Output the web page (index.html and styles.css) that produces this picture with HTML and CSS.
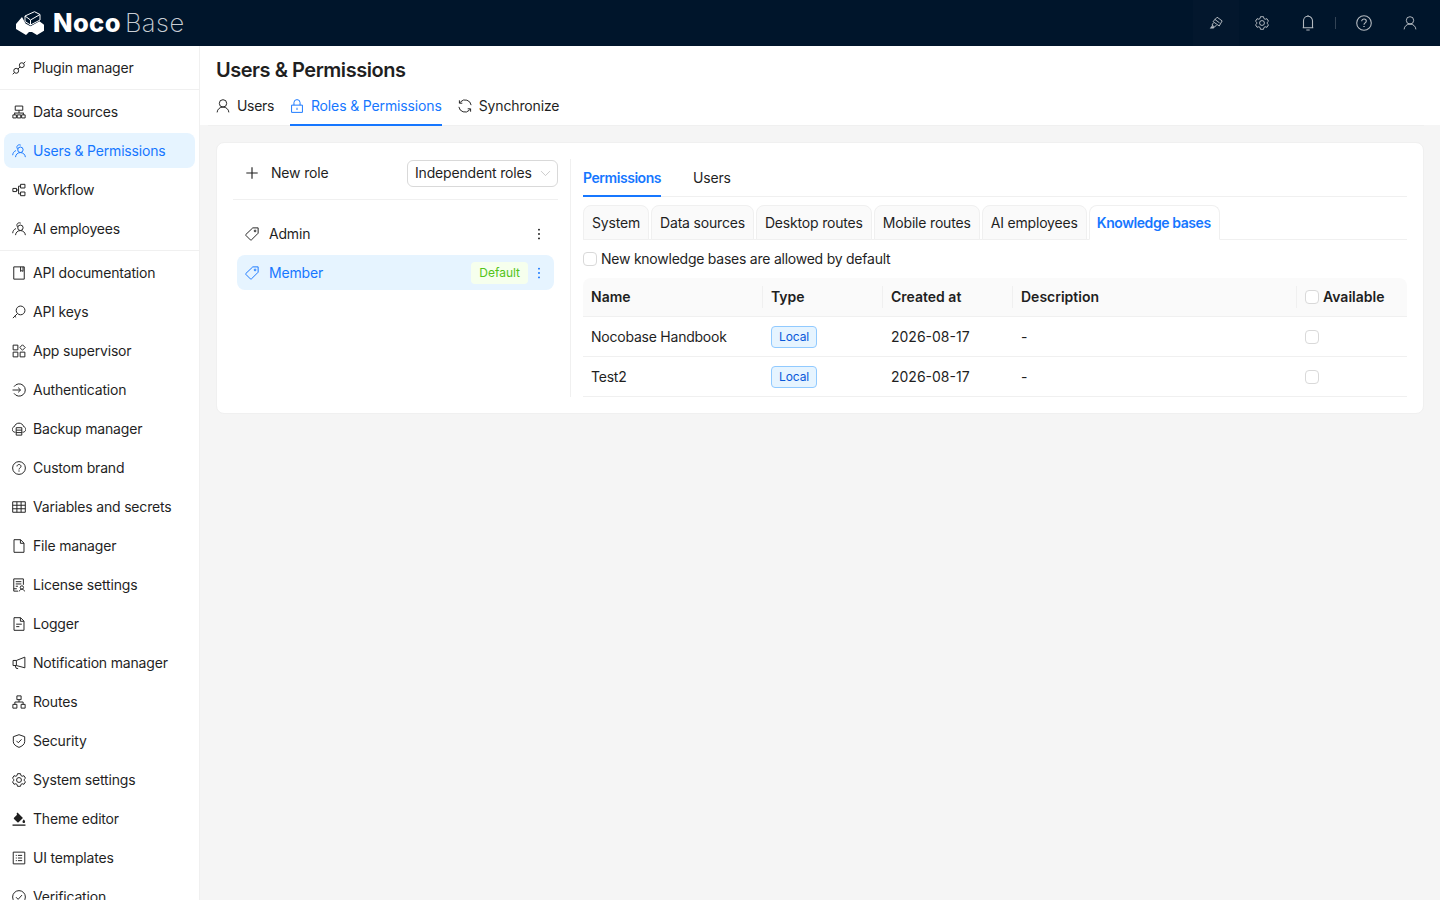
FILE: index.html
```html
<!DOCTYPE html>
<html lang="en">
<head>
<meta charset="utf-8">
<title>Users &amp; Permissions - NocoBase</title>
<link rel="stylesheet" href="styles.css">
</head>
<body>
<svg class="sprite" aria-hidden="true">
  <symbol id="i-plugin" viewBox="0 0 16 16"><circle cx="4.800" cy="11.200" r="2.800"/><circle cx="11.200" cy="4.800" r="2.800"/><path d="M.8 15.200l2-2M13.200 2.800l2-2M6.800 9.200l2.400-2.400"/></symbol>
  <symbol id="i-data" viewBox="0 0 16 16"><path d="M3.700 1.200h8.600v4.800H3.700zM8 6v3.200M2.500 9.200h11M3 9.200v2M13 9.200v2"/><path d="M1 11.300h4v3.500H1zM6 11.300h4v3.500H6zM11 11.300h4v3.500h-4z"/></symbol>
  <symbol id="i-team" viewBox="0 0 16 16"><circle cx="9.600" cy="6.600" r="3.100"/><path d="M4 15c.3-3.200 2.600-5.200 5.600-5.200s5.400 2 5.700 5.200M6.800 6c-2.800-2.500-.3-6.300 3.200-4.700M.8 12.800c.1-2.500 1.500-4.500 3.700-5.300"/></symbol>
  <symbol id="i-flow" viewBox="0 0 16 16"><path d="M1 6.200h4.200v3.600H1zM9.800 1.500h5v4.200h-5zM9.800 10.300h5v4.200h-5zM5.200 8h2.300M7.500 3.600v8.800M7.500 3.600h2.300M7.500 12.400h2.300"/></symbol>
  <symbol id="i-doc" viewBox="0 0 16 16"><path d="M2 1h12v14H2zM9.800 1v5.200l1.500-1 1.300 1V1"/></symbol>
  <symbol id="i-key" viewBox="0 0 16 16"><circle cx="9.800" cy="6.200" r="5"/><path d="M6.200 9.800L1 15M3.200 12.800l1.500 1.400"/></symbol>
  <symbol id="i-apps" viewBox="0 0 16 16"><path d="M1.300 1.300h5.400v5.400H1.300zM1.300 9.300h5.400v5.400H1.300zM9.300 9.300h5.400v5.400H9.300z"/><path d="M12 .9l3.100 3.100-3.100 3.100L8.900 4z"/></symbol>
  <symbol id="i-login" viewBox="0 0 16 16"><path d="M2.300 4.200a7 7 0 1 1 0 7.600M.6 8h9M7 5.300L9.800 8 7 10.700"/></symbol>
  <symbol id="i-backup" viewBox="0 0 16 16"><path d="M4 11.700C1.900 11.900.3 10.300.3 8.400c0-1.600 1.100-2.900 2.500-3.200C3.400 2.800 5.500 1.300 8 1.300s4.600 1.500 5.200 3.900c1.400.3 2.500 1.600 2.500 3.200 0 1.900-1.600 3.500-3.700 3.300"/><path d="M4.800 6.500h6.400V15H4.800zM4.800 9.300h6.400M4.800 12.100h6.400"/></symbol>
  <symbol id="i-help" viewBox="0 0 16 16"><circle cx="8" cy="8" r="7.300"/><path d="M5.700 6.200c0-1.300 1.100-2.200 2.300-2.200s2.300.9 2.300 2.100c0 1.800-2.300 1.800-2.300 3.600"/><path d="M8 10.900v1.200" stroke-width="1.400"/></symbol>
  <symbol id="i-table" viewBox="0 0 16 16"><path d="M.8 2h14.400v12H.8zM.8 6h14.400M.8 10h14.400M5.600 2v12M10.400 2v12"/></symbol>
  <symbol id="i-file" viewBox="0 0 16 16"><path d="M2.300.8h7.500l3.900 3.900v10.500H2.300zM9.600.8v4.100h4.100"/></symbol>
  <symbol id="i-license" viewBox="0 0 16 16"><path d="M7 15H2V1h11v6.800M4.300 4.200h6.400M4.300 6.800h6.400M4.300 9.400h2.500M2 12.300h3.500"/><circle cx="11.300" cy="10.800" r="1.900"/><path d="M8.300 15.300c.2-1.400 1.500-2.500 3-2.500s2.800 1.100 3 2.500"/></symbol>
  <symbol id="i-log" viewBox="0 0 16 16"><path d="M2.300.8h7.500l3.900 3.900v10.500H2.300zM9.600.8v4.100h4.100M4.800 8.200h6.400M4.800 11h3.600"/></symbol>
  <symbol id="i-notify" viewBox="0 0 16 16"><path d="M14.700 1.300v12.200L5 10.900H1.200V5.100H5zM5 5.100v5.800M3.800 10.900l.8 3 2.400.6"/></symbol>
  <symbol id="i-routes" viewBox="0 0 16 16"><path d="M5.600 1h4.800v4.300H5.600zM1 10.700h4.600V15H1zM10.400 10.700H15V15h-4.600zM8 5.300v2.700M3.300 10.700V8h9.400v2.700"/></symbol>
  <symbol id="i-shield" viewBox="0 0 16 16"><path d="M8 .8l6.500 2.300v5.700c0 3.200-3.200 5.200-6.500 6.500-3.300-1.300-6.500-3.300-6.500-6.500V3.100zM5.100 7.800L7.200 10l3.700-3.900"/></symbol>
  <symbol id="i-gear" viewBox="0 0 16 16"><circle cx="8" cy="8" r="2.800"/><path d="M6.300.8h3.400l.5 2.100 1.400.8 2.100-.6 1.700 2.900-1.600 1.500v1l1.600 1.500-1.700 2.900-2.100-.6-1.400.8-.5 2.100H6.300l-.5-2.100-1.400-.8-2.100.6L.6 10l1.600-1.500v-1L.6 6l1.700-2.900 2.100.6 1.400-.8z"/></symbol>
  <symbol id="i-theme" viewBox="0 0 16 16"><path d="M.6 15h14.800" stroke-width="1.500"/><path class="solid" d="M6.400.7l1.300 1.300 4.800 4.800-5 5a.9.900 0 0 1-1.300 0L2.300 7.900a.9.900 0 0 1 0-1.300l3.500-3.500-.7-1.100z"/><path class="solid" d="M13.500 8.300c.7 1.100 1.500 2 1.500 2.800 0 .8-.7 1.500-1.500 1.500s-1.500-.7-1.500-1.500c0-.8.800-1.700 1.500-2.800z"/></symbol>
  <symbol id="i-tpl" viewBox="0 0 16 16"><path d="M1.400 1.300h13.200v13.400H1.400zM6.800 5h4.800M6.800 8h4.800M6.800 11h4.800M4.300 5h1.200M4.300 8h1.200M4.300 11h1.200"/></symbol>
  <symbol id="i-check" viewBox="0 0 16 16"><circle cx="8" cy="8" r="7.300"/><path d="M4.600 8.200l2.400 2.500 4.400-4.900"/></symbol>
  <symbol id="i-tag" viewBox="0 0 16 16"><path d="M8.900 1h6.100v6.100l-7.700 7.700a.8.800 0 0 1-1.100 0L1 9.600a.8.800 0 0 1 0-1.100z"/><circle cx="11.500" cy="4.500" r="1"/></symbol>
  <symbol id="i-user" viewBox="0 0 16 16"><circle cx="8" cy="5" r="4.200"/><path d="M1.300 15.300C1.500 11.700 4.400 9.200 8 9.200s6.500 2.500 6.700 6.100"/></symbol>
  <symbol id="i-lock" viewBox="0 0 16 16"><path d="M1.800 7h12.400v8.300H1.800zM4.500 7V4.200a3.500 3.500 0 0 1 7 0V7M8 10v2.600"/></symbol>
  <symbol id="i-sync" viewBox="0 0 16 16"><path d="M15 7A7 7 0 0 0 3 3.200L1.700 4.600M1 9a7 7 0 0 0 12 3.800l1.300-1.400"/><path d="M1.600 1.500v3.300h3.300M14.400 14.500v-3.300h-3.300"/></symbol>
  <symbol id="i-plus" viewBox="0 0 16 16"><path d="M8 1.500v13M1.500 8h13" stroke-width="1.300"/></symbol>
  <symbol id="i-more" viewBox="0 0 16 16"><circle class="solid" cx="8" cy="3" r="1.100"/><circle class="solid" cx="8" cy="8" r="1.100"/><circle class="solid" cx="8" cy="13" r="1.100"/></symbol>
  <symbol id="i-down" viewBox="0 0 16 16"><path d="M1.500 4.500L8 11l6.500-6.500"/></symbol>
  <symbol id="i-bell" viewBox="0 0 16 16"><path d="M3.500 12.800V5.800a4.500 4.500 0 0 1 9 0v7M2.700 12.800h10.600M6.300 15h3.400M8 0v1.400"/></symbol>
  <symbol id="i-high" viewBox="0 0 16 16"><path d="M9.300 1.400l5.700 4.200-3.300 5.800-7.100-5zM6.500 3.800l5.600 4.100M5 7.800l-1.600 2.600 3 2.200 2.200-2.300"/><path class="solid" d="M.8 14.300l2.500-3.300 3 2.200-1.200 1.200z"/></symbol>
</svg>

<header class="topbar">
  <div class="logo">
    <svg class="logo-mark" viewBox="0 0 30 24"><path class="mark-fill" d="M0 13L6 6l3.500 6.500 5 2.800 9-5 4.500 3.500v6L21 24l-5-3h-3l-3 3-10-6z"/><path class="mark-line" d="M9 5L18.500.7 24 3.500V9l-9.500 5L9 10.500zM9 5l5.500 4L24 3.500M14.500 9v5"/></svg>
    <span class="logo-a">Noco</span><span class="logo-b">Base</span>
  </div>
  <div class="top-actions">
    <button class="top-btn top-first"><svg class="ic"><use href="#i-high"/></svg></button>
    <button class="top-btn"><svg class="ic"><use href="#i-gear"/></svg></button>
    <button class="top-btn"><svg class="ic ic-lg"><use href="#i-bell"/></svg></button>
    <span class="top-sep"></span>
    <button class="top-btn"><svg class="ic ic-lg"><use href="#i-help"/></svg></button>
    <button class="top-btn"><svg class="ic"><use href="#i-user"/></svg></button>
  </div>
</header>

<div class="shell">
  <nav class="sidebar">
    <a class="nav"><svg class="ic"><use href="#i-plugin"/></svg>Plugin manager</a>
    <div class="nav-sep"></div>
    <a class="nav"><svg class="ic"><use href="#i-data"/></svg>Data sources</a>
    <a class="nav nav-on"><svg class="ic"><use href="#i-team"/></svg>Users &amp; Permissions</a>
    <a class="nav"><svg class="ic"><use href="#i-flow"/></svg>Workflow</a>
    <a class="nav"><svg class="ic"><use href="#i-team"/></svg>AI employees</a>
    <div class="nav-sep"></div>
    <a class="nav"><svg class="ic"><use href="#i-doc"/></svg>API documentation</a>
    <a class="nav"><svg class="ic"><use href="#i-key"/></svg>API keys</a>
    <a class="nav"><svg class="ic"><use href="#i-apps"/></svg>App supervisor</a>
    <a class="nav"><svg class="ic"><use href="#i-login"/></svg>Authentication</a>
    <a class="nav"><svg class="ic"><use href="#i-backup"/></svg>Backup manager</a>
    <a class="nav"><svg class="ic"><use href="#i-help"/></svg>Custom brand</a>
    <a class="nav"><svg class="ic"><use href="#i-table"/></svg>Variables and secrets</a>
    <a class="nav"><svg class="ic"><use href="#i-file"/></svg>File manager</a>
    <a class="nav"><svg class="ic"><use href="#i-license"/></svg>License settings</a>
    <a class="nav"><svg class="ic"><use href="#i-log"/></svg>Logger</a>
    <a class="nav"><svg class="ic"><use href="#i-notify"/></svg>Notification manager</a>
    <a class="nav"><svg class="ic"><use href="#i-routes"/></svg>Routes</a>
    <a class="nav"><svg class="ic"><use href="#i-shield"/></svg>Security</a>
    <a class="nav"><svg class="ic"><use href="#i-gear"/></svg>System settings</a>
    <a class="nav"><svg class="ic"><use href="#i-theme"/></svg>Theme editor</a>
    <a class="nav"><svg class="ic"><use href="#i-tpl"/></svg>UI templates</a>
    <a class="nav"><svg class="ic"><use href="#i-check"/></svg>Verification</a>
  </nav>

  <main class="main">
    <section class="page-head">
      <h1 class="page-title">Users &amp; Permissions</h1>
      <div class="page-tabs">
        <a class="page-tab"><svg class="ic"><use href="#i-user"/></svg>Users</a>
        <a class="page-tab page-tab-on"><svg class="ic"><use href="#i-lock"/></svg>Roles &amp; Permissions</a>
        <a class="page-tab"><svg class="ic"><use href="#i-sync"/></svg>Synchronize</a>
      </div>
    </section>

    <section class="card">
      <aside class="roles">
        <div class="roles-head">
          <button class="new-role"><svg class="ic"><use href="#i-plus"/></svg>New role</button>
          <div class="select">Independent roles<svg class="ic ic-down"><use href="#i-down"/></svg></div>
        </div>
        <ul class="role-list">
          <li class="role"><svg class="ic"><use href="#i-tag"/></svg><span class="role-name">Admin</span><svg class="ic"><use href="#i-more"/></svg></li>
          <li class="role role-on"><svg class="ic"><use href="#i-tag"/></svg><span class="role-name">Member</span><span class="tag-default">Default</span><svg class="ic"><use href="#i-more"/></svg></li>
        </ul>
      </aside>

      <div class="perm">
        <div class="line-tabs">
          <a class="line-tab line-tab-on">Permissions</a>
          <a class="line-tab">Users</a>
        </div>
        <div class="card-tabs">
          <a class="card-tab">System</a>
          <a class="card-tab">Data sources</a>
          <a class="card-tab">Desktop routes</a>
          <a class="card-tab">Mobile routes</a>
          <a class="card-tab">AI employees</a>
          <a class="card-tab card-tab-on">Knowledge bases</a>
        </div>
        <label class="allow"><span class="box"></span>New knowledge bases are allowed by default</label>
        <table class="kb">
          <thead>
            <tr>
              <th class="c-name">Name</th>
              <th class="c-type">Type</th>
              <th class="c-date">Created at</th>
              <th>Description</th>
              <th class="c-avail"><span class="avail"><span class="box"></span>Available</span></th>
            </tr>
          </thead>
          <tbody>
            <tr><td>Nocobase Handbook</td><td><span class="tag-local">Local</span></td><td class="cell-date">2026-08-17</td><td>-</td><td><span class="box box-cell"></span></td></tr>
            <tr><td>Test2</td><td><span class="tag-local">Local</span></td><td class="cell-date">2026-08-17</td><td>-</td><td><span class="box box-cell"></span></td></tr>
          </tbody>
        </table>
      </div>
    </section>
  </main>
</div>
</body>
</html>
```
FILE: styles.css
```css
* { box-sizing: border-box; }
html, body { height: 100%; }
body {
  margin: 0;
  overflow: hidden;
  background: #f5f5f5;
  color: #1f1f1f;
  font: 14px/22px Inter, "Liberation Sans", sans-serif;
  letter-spacing: -.18px;
}
button { font: inherit; letter-spacing: inherit; color: inherit; background: none; border: 0; padding: 0; }
ul { list-style: none; margin: 0; padding: 0; }
.sprite { display: none; }
.ic {
  width: 14px;
  height: 14px;
  flex: none;
  fill: none;
  stroke: currentColor;
  stroke-width: 1.100;
}
.solid { fill: currentColor; stroke: none; }

.topbar {
  height: 46px;
  background: #00152b;
  display: flex;
  align-items: center;
  justify-content: space-between;
}
.logo { display: flex; align-items: center; padding-left: 16px; color: #fff; font-size: 25.500px; line-height: 46px; letter-spacing: 0; }
.logo-mark { width: 30px; height: 24px; margin-right: 7px; }
.mark-fill { fill: #fff; }
.mark-line { fill: none; stroke: #fff; stroke-width: 1; }
.logo-a { font-weight: 800; letter-spacing: .4px; }
.logo-b { font-weight: 200; color: #c9ced4; margin-left: 4px; letter-spacing: .5px; }
.top-actions { display: flex; align-items: center; padding-right: 7px; color: rgba(255,255,255,.7); }
.top-btn { width: 46px; height: 46px; display: flex; align-items: center; justify-content: center; }
.top-first { background: rgba(255,255,255,.012); }
.top-sep { width: 1px; height: 12px; background: rgba(255,255,255,.2); margin: 0 5px 0 4px; }
.ic-lg { width: 16px; height: 16px; }

.shell { display: flex; height: 854px; }
.sidebar {
  width: 200px;
  flex: none;
  height: 854px;
  overflow: hidden;
  background: #fff;
  border-right: 1px solid #f0f0f0;
  padding-top: 4px;
}
.nav {
  height: 35px;
  margin: 0 4px 4px;
  padding-left: 8px;
  display: flex;
  align-items: center;
  gap: 7px;
  border-radius: 8px;
  width: 191px;
}
.nav-on { background: #e6f4ff; color: #1677ff; }
.nav-sep { height: 1px; background: #f0f0f0; margin-bottom: 4px; }

.main { flex: 1; min-width: 0; }
.page-head {
  height: 79px;
  background: #fff;
  padding: 13px 16px 0;
}
.page-title { margin: 0; font-size: 20px; line-height: 22px; font-weight: 600; letter-spacing: -.47px; }
.page-tabs {
  display: flex;
  gap: 16px;
  margin: 10px 0 0 -8px;
  padding-left: 8px;
  height: 35px;
  border-bottom: 1px solid #f0f0f0;
}
.page-tab { display: flex; align-items: center; gap: 7px; height: 35px; padding-bottom: 3px; border-bottom: 2px solid transparent; letter-spacing: -.14px; }
.page-tab:first-child { letter-spacing: -.34px; }
.page-tab-on { color: #1677ff; border-bottom-color: #1677ff; }

.card {
  display: flex;
  margin: 17px 16px 0;
  padding: 16px;
  background: #fff;
  border: 1px solid #f0f0f0;
  border-radius: 8px;
}
.roles { width: 338px; flex: none; padding-right: 12px; border-right: 1px solid #f0f0f0; }
.roles-head {
  display: flex;
  align-items: center;
  justify-content: space-between;
  height: 41px;
  padding: 1px 0 12px;
  border-bottom: 1px solid #f0f0f0;
}
.new-role { display: flex; align-items: center; gap: 12px; padding: 0 0 1px 12px; }
.select {
  width: 151px;
  height: 27px;
  border: 1px solid #d9d9d9;
  border-radius: 6px;
  padding: 0 0 1px 7px;
  display: flex;
  align-items: center;
  gap: 8px;
}
.ic-down { width: 11px; height: 11px; color: #b5b5b5; stroke-width: 1; }
.role-list { padding: 16px 4px 0; }
.role {
  height: 35px;
  display: flex;
  align-items: center;
  gap: 10px;
  padding: 0 8px;
  border-radius: 8px;
  margin-bottom: 4px;
}
.role-name { flex: 1; }
.role-on { background: #e6f4ff; color: #1677ff; }
.tag-default {
  height: 22px;
  padding: 0 8px;
  font-size: 12px;
  line-height: 22px;
  letter-spacing: 0;
  color: #52c41a;
  background: #f6ffed;
  border-radius: 4px;
  margin-right: -6px;
}
.perm { flex: 1; min-width: 0; padding-left: 12px; }
.line-tabs { display: flex; gap: 32px; height: 38px; border-bottom: 1px solid #f0f0f0; }
.line-tab { padding: 8px 0; height: 38px; }
.line-tab-on { color: #1677ff; font-weight: 600; letter-spacing: -.45px; border-bottom: 2px solid #1677ff; }
.card-tabs { display: flex; gap: 2px; margin-top: 8px; height: 35px; border-bottom: 1px solid #f0f0f0; }
.card-tab {
  height: 35px;
  padding: 6px 8px;
  background: #fafafa;
  border: 1px solid #f0f0f0;
  border-radius: 8px 8px 0 0;
}
.card-tab-on { background: #fff; color: #1677ff; font-weight: 600; letter-spacing: -.42px; padding-left: 7px; border-bottom-color: #fff; }
.allow { display: flex; align-items: center; gap: 4px; margin: 8px 0; height: 22px; letter-spacing: -.24px; }
.box {
  display: block;
  width: 14px;
  height: 14px;
  flex: none;
  background: #fff;
  border: 1px solid #d9d9d9;
  border-radius: 4px;
}
.kb { width: 100%; border-collapse: separate; border-spacing: 0; table-layout: fixed; }
.kb th {
  position: relative;
  height: 39px;
  padding: 8px;
  text-align: left;
  font-weight: 600;
  letter-spacing: 0;
  background: #fafafa;
  border-bottom: 1px solid #f0f0f0;
}
.kb th:not(:last-child)::before {
  content: "";
  position: absolute;
  right: 0;
  top: 8px;
  bottom: 8px;
  width: 1px;
  background: #f0f0f0;
}
.kb th:first-child { border-top-left-radius: 8px; }
.kb th:last-child { border-top-right-radius: 8px; }
.kb td { height: 40px; padding: 8px; border-bottom: 1px solid #f0f0f0; letter-spacing: -.23px; }
.kb .cell-date { letter-spacing: 0; }
.c-name { width: 180px; }
.c-type { width: 120px; }
.c-date { width: 130px; }
.c-avail { width: 110px; }
.avail { display: flex; align-items: center; gap: 4px; }
.tag-local {
  display: inline-block;
  height: 22px;
  padding: 0 7px;
  font-size: 12px;
  line-height: 20px;
  letter-spacing: -.1px;
  color: #0958d9;
  background: #e6f4ff;
  border: 1px solid #91caff;
  border-radius: 4px;
  vertical-align: top;
}
```
